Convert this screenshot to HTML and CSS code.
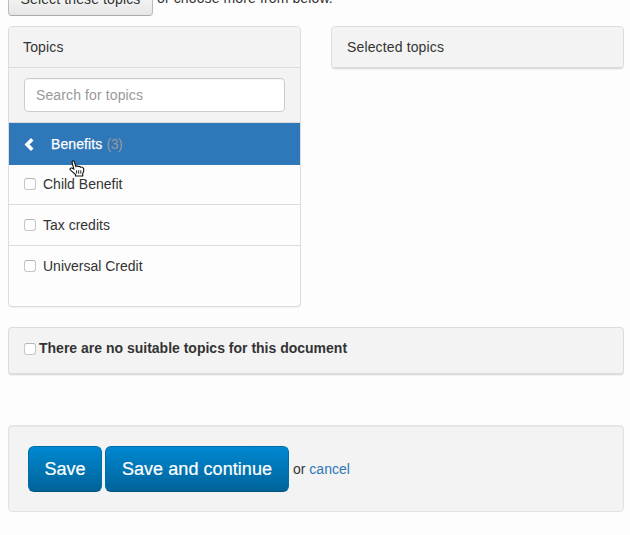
FILE: index.html
```html
<!DOCTYPE html>
<html lang="en">
<head>
<meta charset="utf-8">
<title>Topics</title>
<link rel="stylesheet" href="styles.css">
</head>
<body>
<main>
  <div class="intro">
    <button class="btn-default">Select these topics</button>
    <span class="intro-text">or choose more from below.</span>
  </div>
  <div class="columns">
    <section class="panel topics">
      <div class="heading">Topics</div>
      <div class="search"><input type="text" placeholder="Search for topics"></div>
      <div class="current">
        <svg class="chevron" viewBox="0 0 10 12"><path d="M8 1.2 3.2 6 8 10.8" fill="none" stroke="#fff" stroke-width="3.3"/></svg>
        <span class="name">Benefits</span><span class="count">(3)</span>
        <svg class="pointer" viewBox="0 0 16 17"><path d="M3 2Q3.6 -.2 5.2 1.5L7 6.5Q8 5.2 9.2 6.6Q10.6 5.8 11.6 7.2Q13.4 6.4 14.4 8.3Q15.4 11 13.7 13.5V16H6.5V14.5L1.2 9.8Q.6 7.8 2.8 8L4.8 9Z" fill="#fff" stroke="#111" stroke-width="1.1"/><path d="M7.6 10.3v3.4M9.7 10.3v3.4M11.8 10.3v3.4" stroke="#111" stroke-width=".9"/></svg>
      </div>
      <label class="row"><input type="checkbox">Child Benefit</label>
      <label class="row"><input type="checkbox">Tax credits</label>
      <label class="row"><input type="checkbox">Universal Credit</label>
    </section>
    <section class="panel selected"><div class="heading">Selected topics</div></section>
  </div>
  <label class="panel none"><input type="checkbox">There are no suitable topics for this document</label>
  <div class="actions">
    <button class="btn-primary">Save</button>
    <button class="btn-primary wide">Save and continue</button>
    <span class="or">or <a>cancel</a></span>
  </div>
</main>
</body>
</html>
```
FILE: styles.css
```css
* { box-sizing: border-box; }
body {
  margin: 0;
  background: #fdfdfd;
  color: #333;
  font: 14px/20px "Liberation Sans", Arial, sans-serif;
  overflow: hidden;
}
main { width: 616px; margin-left: 8px; }
button, input { font-family: inherit; margin: 0; }
.intro {
  display: flex;
  align-items: flex-end;
  gap: 4px;
  height: 16px;
  margin-bottom: 10px;
}
.btn-default {
  flex: none;
  width: 145px;
  height: 34px;
  padding: 0;
  border: 1px solid #bbb;
  border-color: #ccc #bbb #aaa;
  border-radius: 4px;
  background: linear-gradient(#fff, #e6e6e6);
  color: #333;
  font-size: 14px;
  line-height: 20px;
  letter-spacing: .12px;
}
.intro-text { line-height: 20px; padding-bottom: 8px; letter-spacing: .12px; }
.columns { display: flex; gap: 30px; align-items: flex-start; margin-bottom: 20px; }
.panel {
  border: 1px solid #dcdcdc;
  border-radius: 4px;
  box-shadow: 0 1px 1px rgba(0, 0, 0, .05);
}
.topics { width: 293px; height: 281px; background: #fdfdfd; }
.heading {
  height: 41px;
  padding: 10px 14px;
  background: #f3f3f3;
  border-bottom: 1px solid #dcdcdc;
  border-radius: 3px 3px 0 0;
  letter-spacing: .14px;
}
.selected { width: 293px; height: 43px; background: #f3f3f3; }
.selected .heading { padding-left: 15px; }
.search {
  height: 55px;
  padding: 10px 15px;
  background: #f3f3f3;
  border-bottom: 1px solid #dcdcdc;
}
.search input {
  display: block;
  width: 261px;
  height: 34px;
  padding: 0 12px 1px 11px;
  border: 1px solid #ccc;
  border-radius: 4px;
  background: #fff;
  box-shadow: inset 0 1px 1px rgba(0, 0, 0, .04);
  font-size: 14px;
  letter-spacing: .12px;
}
.search input::placeholder { color: #999; }
.current {
  position: relative;
  display: flex;
  align-items: center;
  height: 42px;
  padding-left: 14px;
  background: #2e77b8;
  color: #fff;
}
.chevron { width: 12px; height: 13px; margin-right: 16px; }
.name { -webkit-text-stroke: .25px #fff; letter-spacing: .1px; }
.count { margin-left: 4px; color: #999; letter-spacing: -.4px; }
.pointer { position: absolute; left: 60px; top: 37px; width: 16px; height: 17px; }
.row {
  display: flex;
  align-items: center;
  height: 41px;
  padding-left: 15px;
  border-bottom: 1px solid #dcdcdc;
}
.current + .row { height: 40px; padding-bottom: 1px; }
.row:last-child { height: 40px; border: 0; }
input[type="checkbox"] {
  appearance: none;
  flex: none;
  width: 12px;
  height: 12px;
  border: 1px solid #c6c6c6;
  border-top-color: #b5b5b5;
  border-radius: 3px;
  background: #fff;
}
.row input { margin-right: 7px; }
.none {
  display: flex;
  align-items: center;
  height: 48px;
  padding: 0 0 5px 15px;
  background: #f3f3f3;
  border-bottom-width: 2px;
  font-weight: bold;
}
.none input { margin: 2px 3px 0 0; }
.actions {
  display: flex;
  align-items: center;
  height: 87px;
  margin-top: 50px;
  padding: 1px 0 0 19px;
  background: #f3f3f3;
  border: 1px solid #e2e2e2;
  border-radius: 4px;
  box-shadow: inset 0 1px 1px rgba(0, 0, 0, .05);
}
.btn-primary {
  width: 74px;
  height: 46px;
  margin-right: 3px;
  padding: 0 0 1px;
  border: 1px solid #006da8;
  border-bottom-color: #005580;
  border-radius: 6px;
  background: linear-gradient(#0088d1, #006399);
  color: #fff;
  font-size: 18px;
  line-height: 24px;
  -webkit-text-stroke: .2px #fff;
}
.btn-primary.wide { width: 184px; margin-right: 4px; letter-spacing: .06px; }
.or { padding-bottom: 1px; }
a { color: #2e77b8; }
```
